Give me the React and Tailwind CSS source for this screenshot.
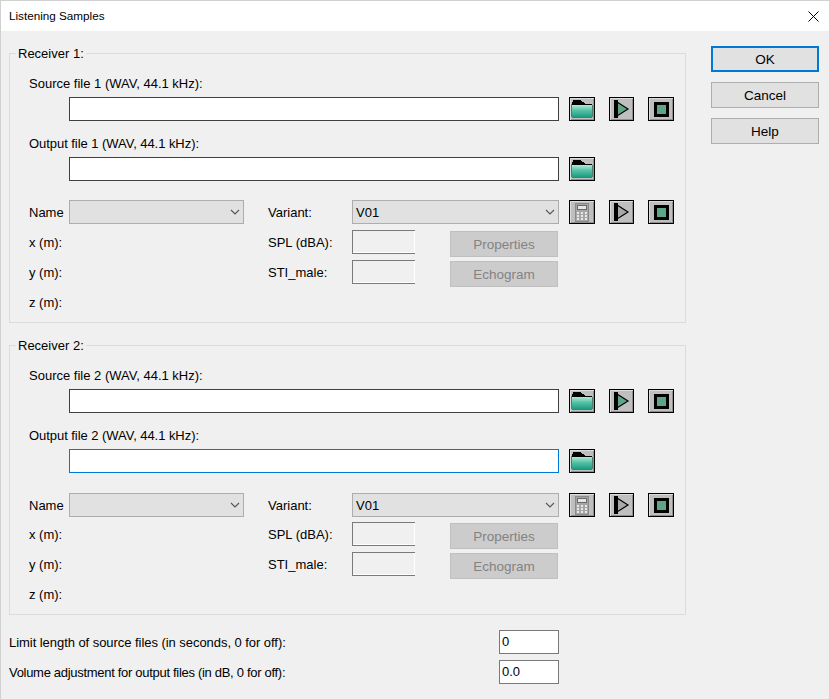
import React from 'react';

const FONT = "font-['Liberation_Sans',Arial,sans-serif]";

function IconButton({ children, w = 'w-[26px]' }) {
  return (
    <button className={`${w} h-6 shrink-0 border border-black bg-[#bfbfbf] shadow-[inset_1px_1px_0_#dcdcdc,inset_-1px_-1px_0_#8f8f8f] flex items-center justify-center`}>
      {children}
    </button>
  );
}

function FolderBtn({ id }) {
  return (
    <IconButton>
      <svg width="22" height="18" viewBox="0 0 22 18" shapeRendering="crispEdges">
        <defs>
          <linearGradient id={id} x1="0" y1="0" x2="0" y2="1">
            <stop offset="0" stopColor="#b4e8d6" />
            <stop offset="0.45" stopColor="#55c2a6" />
            <stop offset="1" stopColor="#1c9c82" />
          </linearGradient>
        </defs>
        <path d="M2 0h7l2 2h-9zM1 2h11l2 2h7v1H1z" fill="#000" />
        <rect x="0" y="4" width="1" height="13" fill="#4f7d70" />
        <rect x="21" y="5" width="1" height="12" fill="#4f7d70" />
        <rect x="1" y="17" width="20" height="1" fill="#4f7d70" />
        <rect x="1" y="5" width="20" height="12" fill={`url(#${id})`} />
      </svg>
    </IconButton>
  );
}

function PlayBtn({ fill = '#5da587' }) {
  return (
    <IconButton w="w-[25px]">
      <svg width="17" height="18" viewBox="0 0 17 18">
        <path d="M4 2l11 7-11 7z" fill={fill} stroke="#000" strokeWidth="1.2" />
        <rect x="1" y="0" width="4" height="18" fill="#000" />
      </svg>
    </IconButton>
  );
}

function StopBtn() {
  return (
    <IconButton>
      <svg width="15" height="15" viewBox="0 0 15 15" shapeRendering="crispEdges">
        <rect x="0" y="0" width="15" height="15" fill="#000" />
        <rect x="3" y="3" width="9" height="9" fill="#5da587" />
      </svg>
    </IconButton>
  );
}

function CalcBtn() {
  return (
    <IconButton>
      <svg width="14" height="19" viewBox="0 0 14 19" shapeRendering="crispEdges">
        <rect x="0" y="0" width="14" height="19" fill="#8a8a8a" />
        <rect x="1" y="1" width="12" height="17" fill="#a6a6a6" />
        <rect x="2" y="2" width="10" height="5" fill="#6a6a6a" />
        <rect x="3" y="3" width="8" height="3" fill="#e6e6e6" />
        {[9, 12, 15].map(y => [2, 6, 10].map(x => (
          <rect key={`${x}-${y}`} x={x} y={y} width="2" height="2" fill="#e8e8e8" />
        )))}
      </svg>
    </IconButton>
  );
}

function Chevron() {
  return (
    <svg width="10" height="6" viewBox="0 0 10 6" className="shrink-0">
      <path d="M1 1l4 4 4-4" fill="none" stroke="#555" strokeWidth="1.1" />
    </svg>
  );
}

function Select({ w, value }) {
  return (
    <div className={`${w} h-6 shrink-0 bg-[#e1e1e1] border border-[#adadad] flex items-center justify-between pl-[3px] pr-[3px] text-[13px]`}>
      <span className="pt-px">{value}</span>
      <Chevron />
    </div>
  );
}

function ReadOnly() {
  return (
    <div className="w-[63px] h-6 border-y border-l border-[#7a7a7a] bg-[#f0f0f0] shadow-[inset_-1px_-1px_0_#fff]" />
  );
}

function Disabled({ label }) {
  return (
    <div className="w-[108px] h-[26px] mt-px ml-[35px] pt-[2px] bg-[#cccccc] border border-[#bfbfbf] text-[#838383] flex items-center justify-center text-[13.5px]">
      {label}
    </div>
  );
}

function Label({ children, className = '' }) {
  return <div className={`h-6 pt-px flex items-center shrink-0 text-[13px] ${className}`}>{children}</div>;
}

function Receiver({ n, focused, idPrefix, selectTop, afterSelect, className }) {
  return (
    <div className={`relative w-[677px] border border-[#dcdcdc] pl-[19px] pb-2 ${className}`}>
      <div className="absolute left-[6px] top-[-9px] h-[18px] px-[2px] bg-[#f0f0f0] text-[13px] leading-[18px]">Receiver {n}:</div>

      <div className="mt-5 pt-px h-[18px] leading-[18px] text-[13px]">Source file {n} (WAV, 44.1 kHz):</div>
      <div className="mt-[5px] ml-10 flex">
        <div className="w-[490px] h-6 bg-white border border-[#404040]" />
        <div className="ml-[10px] flex gap-[14px]">
          <FolderBtn id={`${idPrefix}a`} />
          <PlayBtn />
          <StopBtn />
        </div>
      </div>

      <div className="mt-[13px] pt-px h-[18px] leading-[18px] text-[13px] tracking-[-0.05px]">Output file {n} (WAV, 44.1 kHz):</div>
      <div className="mt-[5px] ml-10 flex">
        <div className={`w-[490px] h-6 bg-white border ${focused ? 'border-[#0078d7]' : 'border-[#404040]'}`} />
        <div className="ml-[10px]">
          <FolderBtn id={`${idPrefix}b`} />
        </div>
      </div>

      <div className={`${selectTop} flex`}>
        <Label className="w-10">Name</Label>
        <Select w="w-[175px]" value="" />
        <Label className="ml-6 w-[84px]">Variant:</Label>
        <Select w="w-[207px]" value="V01" />
        <div className="ml-[10px] flex gap-[14px]">
          <CalcBtn />
          <PlayBtn fill="#a8a8a8" />
          <StopBtn />
        </div>
      </div>

      <div className={`${afterSelect} flex h-[30px] items-start`}>
        <Label className="w-[239px]">x (m):</Label>
        <Label className="w-[84px]">SPL (dBA):</Label>
        <ReadOnly />
        <Disabled label="Properties" />
      </div>
      <div className="flex h-[30px] items-start">
        <Label className="w-[239px]">y (m):</Label>
        <Label className="w-[84px]">STI_male:</Label>
        <ReadOnly />
        <Disabled label="Echogram" />
      </div>
      <Label>z (m):</Label>
    </div>
  );
}

export default function App() {
  return (
    <div className={`w-[829px] h-[699px] overflow-hidden bg-[#f0f0f0] border-t border-l border-[#d0d0d0] text-black ${FONT}`}>
      <div className="h-[30px] bg-white flex items-center justify-between pl-2 pr-[10px] text-[11.7px]">
        <span>Listening Samples</span>
        <svg width="11" height="11" viewBox="0 0 11 11">
          <path d="M0.5 0.5l10 10M10.5 0.5l-10 10" stroke="#000" strokeWidth="1" />
        </svg>
      </div>

      <div className="flex pl-2">
        <div className="w-[677px]">
          <Receiver n={1} idPrefix="r1" selectTop="mt-[19px]" afterSelect="mt-[6px]" className="mt-[22px]" />
          <Receiver n={2} idPrefix="r2" selectTop="mt-5" afterSelect="mt-[5px]" className="mt-[22px]" focused />

          <div className="mt-[15px] flex items-center">
            <Label className="w-[490px] tracking-[-0.05px]">Limit length of source files (in seconds, 0 for off):</Label>
            <div className="w-[60px] h-6 bg-white border border-[#7a7a7a] flex items-center pl-[2px] text-[13px]">0</div>
          </div>
          <div className="mt-[6px] flex items-center">
            <Label className="w-[490px] tracking-[-0.3px]">Volume adjustment for output files (in dB, 0 for off):</Label>
            <div className="w-[60px] h-6 bg-white border border-[#7a7a7a] flex items-center pl-[2px] text-[13px]">0.0</div>
          </div>
        </div>

        <div className="ml-[25px] mt-[15px] w-[108px] flex flex-col gap-[10px] text-[13.5px]">
          <button className="h-[26px] pt-[2px] bg-[#e1e1e1] border-2 border-[#0078d7]">OK</button>
          <button className="h-[26px] pt-[2px] bg-[#e1e1e1] border border-[#adadad]">Cancel</button>
          <button className="h-[26px] pt-[2px] bg-[#e1e1e1] border border-[#adadad]">Help</button>
        </div>
      </div>
    </div>
  );
}
